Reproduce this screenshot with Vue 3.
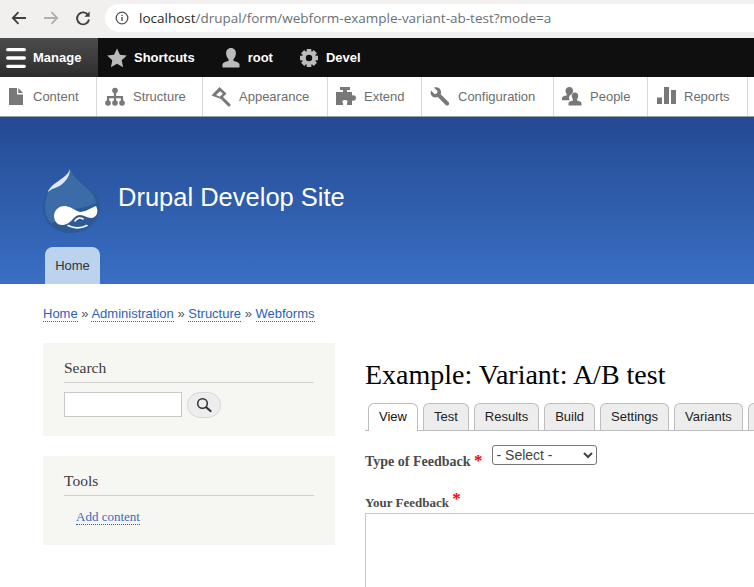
<template>
  <div class="page">
    <!-- browser chrome -->
    <div class="chrome">
      <div class="nav-btns">
        <svg width="18" height="18" viewBox="0 0 18 18"><path d="M16 9H3M8.500 3.200 2.800 9l5.700 5.800" fill="none" stroke="#404040" stroke-width="1.800"/></svg>
        <svg width="18" height="18" viewBox="0 0 18 18"><path d="M2 9h13M9.500 3.200 15.200 9l-5.700 5.800" fill="none" stroke="#b0b0b0" stroke-width="1.800"/></svg>
        <svg width="18" height="18" viewBox="0 0 18 18"><path d="M14.200 6.200A6 6 0 1 0 15 10.500" fill="none" stroke="#404040" stroke-width="1.900"/><path d="M15.600 2.600v5.200h-5.200z" fill="#404040"/></svg>
      </div>
      <div class="url-bar">
        <svg width="14" height="14" viewBox="0 0 14 14"><circle cx="7" cy="7" r="5.800" fill="none" stroke="#555" stroke-width="1.300"/><path d="M7 6v4M7 3.800v1.300" stroke="#555" stroke-width="1.400"/></svg>
        <span class="url"><span class="host">localhost</span>/drupal/form/webform-example-variant-ab-test?mode=a</span>
      </div>
    </div>

    <!-- admin toolbar -->
    <div class="toolbar">
      <div class="bar-item manage">
        <svg width="20" height="20" viewBox="0 0 20 20"><path d="M1.700 1.700h16.600M1.700 10h16.600M1.700 18.300h16.600" stroke="#fff" stroke-width="3.300" stroke-linecap="round"/></svg>
        Manage
      </div>
      <div class="bar-item shortcuts">
        <svg width="20" height="20" viewBox="0 0 20 20"><path d="M10 .5l2.900 6.300 6.900.8-5.100 4.700 1.400 6.900L10 15.700l-6.100 3.500 1.400-6.900L.2 7.600l6.900-.8z" fill="#bbb"/></svg>
        Shortcuts
      </div>
      <div class="bar-item user">
        <svg width="20" height="20" viewBox="0 0 20 20"><path d="M10 0c3.200 0 4.900 2.300 4.900 5.200 0 2.400-1 4.500-2.400 5.700v2c2.600.6 6 1.600 6 3.300V19.500h-17v-3.300c0-1.700 3.400-2.700 6-3.300v-2C6.100 9.700 5.100 7.600 5.100 5.200 5.100 2.300 6.800 0 10 0z" fill="#bbb"/></svg>
        root
      </div>
      <div class="bar-item devel">
        <svg width="20" height="20" viewBox="0 0 20 20">
          <g fill="#bbb">
            <circle cx="10" cy="10" r="7"/>
            <rect x="7.700" y="1" width="4.600" height="18"/>
            <rect x="7.700" y="1" width="4.600" height="18" transform="rotate(45 10 10)"/>
            <rect x="7.700" y="1" width="4.600" height="18" transform="rotate(90 10 10)"/>
            <rect x="7.700" y="1" width="4.600" height="18" transform="rotate(135 10 10)"/>
          </g>
          <circle cx="10" cy="10" r="3.200" fill="#0f0f0f"/>
        </svg>
        Devel
      </div>
    </div>

    <!-- tray -->
    <div class="tray">
      <div class="tray-item" v-for="item in trayItems" :key="item.label" :style="{ width: item.width + 'px' }">
        <svg width="20" height="20" viewBox="0 0 20 20" v-html="item.icon"></svg>
        <span>{{ item.label }}</span>
      </div>
    </div>

    <!-- site header -->
    <header class="site-header">
      <div class="branding">
        <svg class="logo" width="58" height="65" viewBox="0 0 58 65">
          <path d="M27 0C26 8 16 13 9 19 3 24 0 32 0 41 0 55 12 65 28 65 45 65 57 53 57 38 57 20 32 15 27 0z" fill="#2c5a97"/>
          <path d="M27 1C26 8 16 13 10 19 4 24 2 32 2 40c0 6 2 11 6 15 6 0 20-12 24-14 7-1 15-3 21-6C53 22 32 15 27 1z" fill="#3b6ca8"/>
          <path d="M27 1C25 8 16 12 10 17 7 20 5 22 5 24 9 20 14 20 18 17 23 13 27 8 27 1z" fill="#dfe8f2"/>
          <path d="M11 47C12 41 17 38 21 38 27 38 31 42 37 44 42 44 48 40 53 38 56 43 54 50 48 50 44 50 41 47 37 47 33 47 31 50 28 53 24 57 19 58 15 56 12 54 11 51 11 47z" fill="#fff"/>
          <path d="M32 53C34 50 37 49 40 51M25 57.500C31 60.500 38 60.500 44 57.500" fill="none" stroke="#fff" stroke-width="1.600" stroke-linecap="round"/>
        </svg>
        <span class="site-name">Drupal Develop Site</span>
      </div>
      <nav class="primary-tabs"><span class="home-tab">Home</span></nav>
    </header>

    <div class="breadcrumb">
      <a>Home</a> » <a>Administration</a> » <a>Structure</a> » <a>Webforms</a>
    </div>

    <div class="columns">
      <aside class="sidebar">
        <section class="block">
          <h2>Search</h2>
          <div class="search-row">
            <input class="search-input" type="text" />
            <button class="search-btn">
              <svg width="16" height="16" viewBox="0 0 16 16"><circle cx="6.500" cy="6.500" r="4.800" fill="none" stroke="#333" stroke-width="1.500"/><path d="M10.200 10.200l4.300 3.800" stroke="#333" stroke-width="2.200" stroke-linecap="round"/></svg>
            </button>
          </div>
        </section>
        <section class="block">
          <h2>Tools</h2>
          <a class="tool-link">Add content</a>
        </section>
      </aside>

      <main class="content">
        <h1>Example: Variant: A/B test</h1>
        <ul class="tabs">
          <li v-for="(tab, index) in tabs" :key="index" :class="{ active: index === 0 }">{{ tab }}</li>
          <li class="cut-tab"></li>
        </ul>
        <div class="field-type">
          <label>Type of Feedback <span class="req">*</span></label>
          <select class="type-select"><option>- Select -</option></select>
        </div>
        <div class="field-text">
          <label>Your Feedback <span class="req raised">*</span></label>
          <textarea></textarea>
        </div>
      </main>
    </div>
  </div>
</template>

<script setup>
const trayItems = [
  { label: 'Content', width: 97, icon: '<path d="M1 1h8v6.500h6V18H1zM10.300 1 15 6h-4.700z" fill="#787878"/>' },
  { label: 'Structure', width: 106, icon: '<circle cx="10" cy="3.500" r="2.800" fill="#787878"/><path d="M8.900 5h2.200v4h7v5h-2.200v-2.800h-4.800V14H8.900v-2.800H4.100V14H1.900V9h7z" fill="#787878"/><circle cx="3" cy="16" r="2.800" fill="#787878"/><circle cx="10" cy="16" r="2.800" fill="#787878"/><circle cx="17" cy="16" r="2.800" fill="#787878"/>' },
  { label: 'Appearance', width: 125, icon: '<path d="M8.500 0 15.500 6.500 10 12 .5 8.500z" fill="#787878"/><path d="M5 8 9.200 4.200 11.800 6.800 8.800 9.800z" fill="#fff"/><path d="M11 11l7 7" stroke="#787878" stroke-width="3" stroke-linecap="round"/>' },
  { label: 'Extend', width: 94, icon: '<path d="M4 0h10v3h-3v2h5v3.500c1.500-.5 4 0 4 2.500s-2.500 3-4 2.500V18h-5v-2c1-.5 1-3-2-3s-3 2.500-2 3v2H0V5h7V3H4z" fill="#787878"/>' },
  { label: 'Configuration', width: 132, icon: '<path d="M1 3.500 4.500 7 7 6.500 7.500 4 4 .8C7-.5 10.500 1 11 4.500c.2 1 0 2-.3 2.700l8 8c.7.900.7 2-.2 2.800-.800.800-2 .800-2.800 0l-7.900-8C5.500 11 2.500 10.500 1.200 8 .5 6.500.5 5 1 3.500z" fill="#787878"/>' },
  { label: 'People', width: 94, icon: '<path d="M7.500 0c2.300 0 3.500 1.700 3.500 3.800 0 1.400-.5 2.700-1.300 3.500-1.500.5-2.700 2-2.700 3.700 0 .9.300 1.700.7 2.300H0v-2.300c0-1.400 2.500-2.300 4.800-2.800V7.300C4 6.500 3.500 5.200 3.500 3.800 3.500 1.700 5.200 0 7.500 0z" fill="#787878"/><path d="M13 5.500c2 0 3.200 1.500 3.200 3.400 0 1.200-.5 2.300-1.100 3v1.600c2 .4 4.400 1.200 4.400 2.500v2.500H6.500V16c0-1.300 2.400-2.100 4.400-2.500v-1.600c-.600-.7-1.100-1.800-1.100-3 0-1.900 1.200-3.400 3.200-3.400z" fill="#787878"/>' },
  { label: 'Reports', width: 100, icon: '<path d="M1 10.500h5V17H1zM8 0h5v17H8zM15 3h5v14h-5z" fill="#787878"/>' },
]

const tabs = ['View', 'Test', 'Results', 'Build', 'Settings', 'Variants']
</script>

<style>
html, body {
  margin: 0;
  background: #fff;
}
</style>

<style scoped>
.page {
  width: 754px;
  height: 587px;
  overflow: hidden;
  font-family: "Liberation Sans", Arial, sans-serif;
  color: #3b3b3b;
}

.chrome {
  height: 38px;
  box-sizing: border-box;
  padding-bottom: 2px;
  display: flex;
  align-items: center;
  background: #f1f0ee;
}
.nav-btns {
  display: flex;
  gap: 14px;
  padding-left: 10px;
  width: 105px;
  box-sizing: border-box;
}
.url-bar {
  flex: 1;
  height: 28px;
  margin-right: -20px;
  padding-left: 10px;
  display: flex;
  align-items: center;
  gap: 10px;
  background: #fff;
  border-radius: 14px;
}
.url {
  font-family: "Open Sans", "Noto Sans", sans-serif;
  font-size: 13.5px;
  color: #6a6f76;
  white-space: nowrap;
}
.host { color: #2b2b2b; }

.toolbar {
  height: 39px;
  display: flex;
  background: #0f0f0f;
  color: #fff;
  font-size: 13px;
  font-weight: bold;
}
.bar-item {
  display: flex;
  align-items: center;
  gap: 7px;
  padding: 0 7px;
}
.manage {
  width: 98px;
  box-sizing: border-box;
  padding-left: 6px;
  background: linear-gradient(#4c4c4c, #2d2d2d);
}
.shortcuts { padding: 0 12px 0 9px; }
.user { padding: 0 13px 0 14px; }
.devel { padding-left: 13px; }

.tray {
  height: 39px;
  display: flex;
  background: #fff;
  border-bottom: 1px solid #9a9da3;
}
.tray-item {
  box-sizing: border-box;
  display: flex;
  align-items: center;
  gap: 8px;
  padding-left: 8px;
  border-right: 1px solid #d9d9d9;
  font-size: 13px;
  color: #6d6d6d;
}
.tray-item:first-child { gap: 5px; }

.site-header {
  height: 167px;
  box-sizing: border-box;
  padding: 51px 0 0 43px;
  display: flex;
  flex-direction: column;
  justify-content: space-between;
  background: linear-gradient(#234a92, #3a6fc4);
}
.branding {
  display: flex;
  align-items: center;
  gap: 17px;
}
.site-name {
  margin-bottom: 7px;
  font-size: 25.5px;
  color: #fff;
}
.primary-tabs { padding-left: 2px; }
.home-tab {
  display: inline-block;
  width: 55px;
  height: 37px;
  line-height: 37px;
  text-align: center;
  font-size: 13px;
  color: #333;
  background: #bcd3ee;
  border-radius: 8px 8px 0 0;
}

.breadcrumb {
  margin: 21px 0 0 43px;
  font-size: 13px;
  line-height: 17px;
  color: #555;
}
.breadcrumb a {
  color: #2a62c0;
  border-bottom: 1px dotted #2a62c0;
}

.columns {
  margin: 21px 0 0 43px;
  display: flex;
  gap: 30px;
}
.sidebar {
  flex: none;
  width: 292px;
  font-family: "Liberation Serif", "Times New Roman", serif;
}
.block {
  box-sizing: border-box;
  padding: 16px 21px 0;
  margin-bottom: 20px;
  background: #f6f6f2;
}
.block:first-child { height: 93px; }
.block:last-child { height: 89px; }
.block h2 {
  margin: 0 0 9px;
  padding-bottom: 5px;
  border-bottom: 1px solid #d0d0cc;
  font-size: 15.5px;
  font-weight: normal;
  line-height: 18px;
  color: #3b3b3b;
}
.search-row {
  display: flex;
  align-items: flex-start;
  gap: 5px;
}
.search-input {
  width: 118px;
  height: 25px;
  box-sizing: border-box;
  border: 1px solid #c8c8c8;
  background: #fff;
  padding: 0;
}
.search-btn {
  width: 34px;
  height: 26px;
  padding: 0;
  display: flex;
  align-items: center;
  justify-content: center;
  border: 1px solid #d8d8d8;
  border-radius: 13px;
  background: #ededed;
}
.tool-link {
  display: inline-block;
  margin: 4px 0 0 12px;
  font-size: 13px;
  line-height: 15px;
  color: #3a6bc0;
  border-bottom: 1px dotted #1f5fd0;
}

.content {
  flex: none;
  width: 500px;
}
.content h1 {
  margin: 16px 0 0;
  font-family: "Liberation Serif", "Times New Roman", serif;
  font-size: 28px;
  font-weight: normal;
  line-height: 32px;
  color: #000;
}
.tabs {
  list-style: none;
  margin: 12px 0 0;
  padding: 0 0 0 3px;
  display: flex;
  gap: 5px;
  border-bottom: 1px solid #bdbdbd;
}
.tabs li {
  flex: none;
  height: 26px;
  line-height: 25px;
  padding: 0 10px;
  font-size: 13px;
  color: #222;
  background: #ededed;
  border: 1px solid #bdbdbd;
  border-bottom: none;
  border-radius: 6px 6px 0 0;
}
.tabs li.active {
  background: #fff;
  margin-bottom: -1px;
  height: 27px;
  color: #111;
}
.tabs li.cut-tab { width: 40px; }

.field-type {
  display: flex;
  align-items: flex-start;
  margin-top: 14px;
}
.field-type label, .field-text label {
  font-family: "Liberation Serif", "Times New Roman", serif;
  font-weight: bold;
  color: #4a4a4a;
}
.field-type label {
  font-size: 14px;
  line-height: 16px;
  margin: 9px 9px 0 0;
}
.req {
  color: #f00;
  font-size: 17px;
  line-height: 0;
}
.req.raised {
  position: relative;
  top: -3px;
}
.type-select {
  width: 105px;
  height: 20px;
  padding: 0;
  font-family: "Liberation Sans", Arial, sans-serif;
  font-size: 14px;
  color: #444;
  background: #fff;
  border: 1px solid #767676;
  border-radius: 3px;
}
.field-text {
  margin-top: 24px;
}
.field-text label {
  display: block;
  font-size: 13px;
  line-height: 17px;
}
.field-text textarea {
  display: block;
  width: 480px;
  height: 120px;
  box-sizing: border-box;
  margin: 2px 0 0;
  border: 1px solid #c8c8c8;
  resize: none;
}
</style>
